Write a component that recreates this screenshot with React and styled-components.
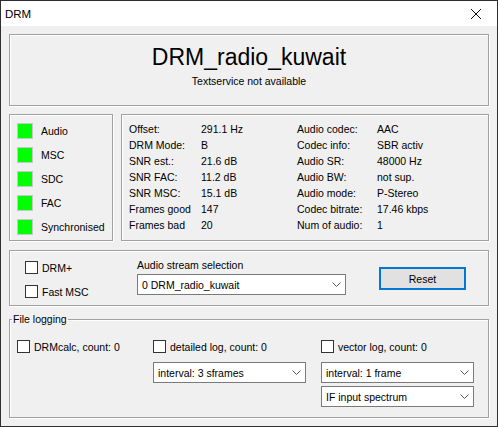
import React from "react";
import styled, { createGlobalStyle } from "styled-components";

const GlobalStyle = createGlobalStyle`
  html, body {
    margin: 0;
    padding: 0;
    background: #f0f0f0;
  }
  * {
    box-sizing: border-box;
  }
`;

const leds = ["Audio", "MSC", "SDC", "FAC", "Synchronised"];

const infoRows = [
  ["Offset:", "291.1 Hz", "Audio codec:", "AAC"],
  ["DRM Mode:", "B", "Codec info:", "SBR activ"],
  ["SNR est.:", "21.6 dB", "Audio SR:", "48000 Hz"],
  ["SNR FAC:", "11.2 dB", "Audio BW:", "not sup."],
  ["SNR MSC:", "15.1 dB", "Audio mode:", "P-Stereo"],
  ["Frames good", "147", "Codec bitrate:", "17.46 kbps"],
  ["Frames bad", "20", "Num of audio:", "1"],
];

const Chevron = () => (
  <svg width="9" height="5" viewBox="0 0 9 5">
    <polyline points="0.5,0.5 4.5,4.5 8.5,0.5" fill="none" stroke="#555" strokeWidth="1" />
  </svg>
);

const CloseIcon = () => (
  <svg width="10" height="10" viewBox="0 0 10 10">
    <line x1="0" y1="0" x2="10" y2="10" stroke="#111" strokeWidth="1" />
    <line x1="10" y1="0" x2="0" y2="10" stroke="#111" strokeWidth="1" />
  </svg>
);

const Combo = ({ value, width }) => (
  <ComboBox $width={width}>
    <span>{value}</span>
    <Chevron />
  </ComboBox>
);

const Check = ({ label }) => (
  <CheckRow>
    <CheckBox />
    <span>{label}</span>
  </CheckRow>
);

const App = () => {
  return (
    <>
      <GlobalStyle />
      <Window>
        <TitleBar>
          <span>DRM</span>
          <CloseButton>
            <CloseIcon />
          </CloseButton>
        </TitleBar>
        <Body>
          <HeaderPanel>
            <StationName>DRM_radio_kuwait</StationName>
            <TextService>Textservice not available</TextService>
          </HeaderPanel>

          <StatusRow>
            <LedPanel>
              {leds.map((name) => (
                <LedRow key={name}>
                  <Led />
                  <span>{name}</span>
                </LedRow>
              ))}
            </LedPanel>
            <InfoPanel>
              {infoRows.map((row) =>
                row.map((cell, i) => <InfoCell key={row[0] + i}>{cell}</InfoCell>)
              )}
            </InfoPanel>
          </StatusRow>

          <OptionsPanel>
            <CheckColumn>
              <Check label="DRM+" />
              <Check label="Fast MSC" />
            </CheckColumn>
            <StreamColumn>
              <StreamLabel>Audio stream selection</StreamLabel>
              <Combo value="0 DRM_radio_kuwait" width={209} />
            </StreamColumn>
            <ResetButton>Reset</ResetButton>
          </OptionsPanel>

          <LogGroup>
            <legend>File logging</legend>
            <LogGrid>
              <LogColumn>
                <Check label="DRMcalc, count: 0" />
              </LogColumn>
              <LogColumn>
                <Check label="detailed log, count: 0" />
                <Combo value="interval: 3 sframes" width={153} />
              </LogColumn>
              <LogColumn>
                <Check label="vector log, count: 0" />
                <ComboStack>
                  <Combo value="interval: 1 frame" width={153} />
                  <Combo value="IF input spectrum" width={153} />
                </ComboStack>
              </LogColumn>
            </LogGrid>
          </LogGroup>
        </Body>
      </Window>
    </>
  );
};

const Window = styled.div`
  width: 498px;
  height: 427px;
  border: 1px solid #2e2e2e;
  background: #f0f0f0;
  font-family: "Liberation Sans", Arial, sans-serif;
  font-size: 10.5px;
  color: #000;
  display: flex;
  flex-direction: column;
`;

const TitleBar = styled.div`
  height: 25px;
  background: #ffffff;
  display: flex;
  align-items: center;
  justify-content: space-between;
  padding-left: 4px;
  font-size: 11.5px;
`;

const CloseButton = styled.div`
  width: 46px;
  height: 25px;
  display: flex;
  align-items: center;
  justify-content: center;
  margin-top: 1px;
  margin-right: -2px;
`;

const Body = styled.div`
  flex: 1;
  padding: 8px 8px 0 8px;
  display: flex;
  flex-direction: column;
`;

const Panel = styled.div`
  border: 1px solid #a0a0a0;
  box-shadow: inset 1px 1px 0 #ffffff, 1px 1px 0 #ffffff;
`;

const HeaderPanel = styled(Panel)`
  height: 72px;
  display: flex;
  flex-direction: column;
  align-items: center;
  padding-top: 9px;
`;

const StationName = styled.div`
  font-size: 23px;
  line-height: 26px;
`;

const TextService = styled.div`
  margin-top: 5px;
  line-height: 13px;
`;

const StatusRow = styled.div`
  display: flex;
  gap: 8px;
  margin-top: 8px;
  height: 127px;
`;

const LedPanel = styled(Panel)`
  width: 104px;
  padding: 8px 0 0 7px;
  display: flex;
  flex-direction: column;
  gap: 8px;
`;

const LedRow = styled.div`
  display: flex;
  align-items: center;
  gap: 8px;
  height: 16px;
`;

const Led = styled.div`
  width: 16px;
  height: 16px;
  background: #00ff00;
  border: 1px solid #c8c8c8;
`;

const InfoPanel = styled(Panel)`
  flex: 1;
  padding: 6px 0 0 7px;
  display: grid;
  grid-template-columns: 72px 96px 80px auto;
  grid-auto-rows: 16px;
  align-content: start;
`;

const InfoCell = styled.div`
  line-height: 16px;
  white-space: nowrap;
`;

const OptionsPanel = styled(Panel)`
  margin-top: 9px;
  height: 56px;
  display: flex;
  align-items: flex-start;
  padding: 8px 0 0 15px;
`;

const CheckColumn = styled.div`
  width: 112px;
  margin-top: 2px;
  display: flex;
  flex-direction: column;
  gap: 11px;
`;

const CheckRow = styled.label`
  display: flex;
  align-items: center;
  gap: 4px;
  height: 13px;
  white-space: nowrap;
`;

const CheckBox = styled.span`
  width: 13px;
  height: 13px;
  flex: none;
  border: 1px solid #333333;
  background: #ffffff;
`;

const StreamColumn = styled.div`
  display: flex;
  flex-direction: column;
  gap: 2px;
`;

const StreamLabel = styled.div`
  line-height: 13px;
`;

const ComboBox = styled.div`
  width: ${(p) => p.$width}px;
  height: 21px;
  background: #ffffff;
  border: 1px solid #7a7a7a;
  display: flex;
  align-items: center;
  justify-content: space-between;
  padding: 0 4px 0 4px;
  white-space: nowrap;
`;

const ResetButton = styled.div`
  margin: 8px 0 0 33px;
  width: 87px;
  height: 23px;
  border: 2px solid #0078d7;
  background: #e1e1e1;
  display: flex;
  align-items: center;
  justify-content: center;
`;

const LogGroup = styled.fieldset`
  margin: 7px 0 0 0;
  padding: 0 2px;
  min-width: 0;
  height: 105px;
  border: 1px solid #a0a0a0;
  box-shadow: inset 1px 1px 0 #ffffff, 1px 1px 0 #ffffff;

  legend {
    padding: 0 1px;
    line-height: 13px;
  }
`;

const LogGrid = styled.div`
  display: grid;
  grid-template-columns: 136px 168px 153px;
  align-items: start;
  padding: 14px 0 0 5px;
`;

const LogColumn = styled.div`
  display: flex;
  flex-direction: column;
  gap: 9px;
`;

const ComboStack = styled.div`
  display: flex;
  flex-direction: column;
  gap: 3px;
`;

export default App;
